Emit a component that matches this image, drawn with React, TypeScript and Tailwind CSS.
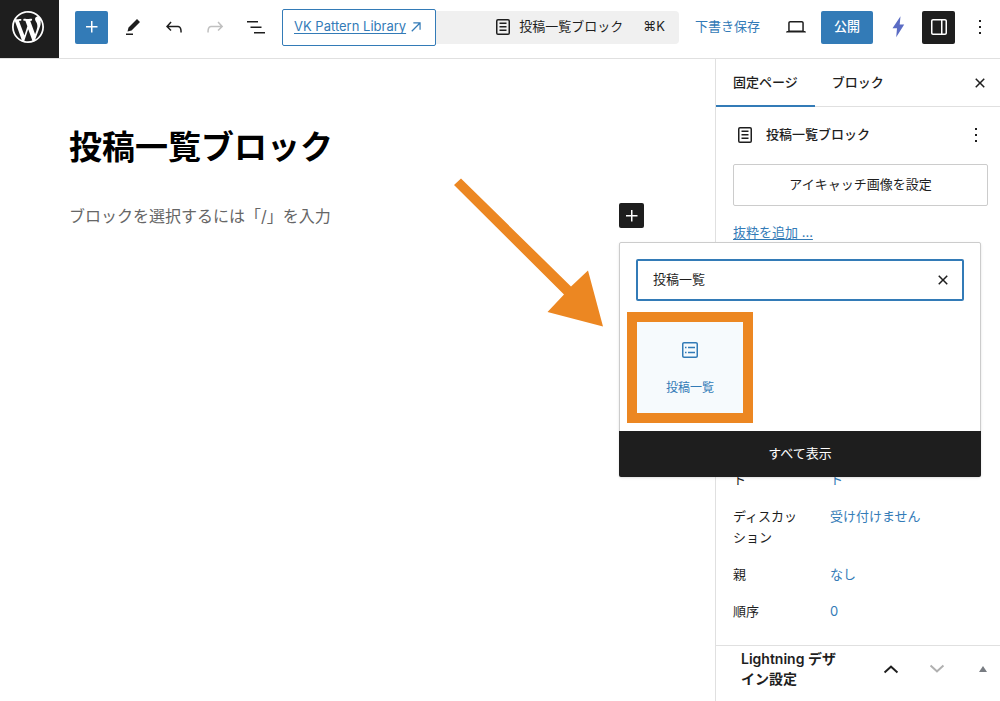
import { useState } from "react";
import type { ReactNode } from "react";
import clsx from "clsx";

const ICONS = {
  plus: "M11 12.5V17.5H12.5V12.5H17.5V11H12.5V6H11V11H6V12.5H11Z",
  edit: "m19 7-3-3-8.5 8.5-1 4 4-1L19 7Zm-7 11.5H5V20h7v-1.5Z",
  undo: "M18.3 11.7c-.6-.6-1.4-.9-2.3-.9H6.7l2.9-3.3-1.1-1-4.5 5L8.5 16l1-1-2.7-2.7H16c.5 0 .9.2 1.3.5 1 1 1 3.4 1 4.5v.3h1.5v-.2c0-1.5 0-4.3-1.5-5.7z",
  redo: "M15.6 6.5l-1.1 1 2.9 3.3H8c-.9 0-1.7.3-2.3.9-1.4 1.5-1.4 4.2-1.4 5.6v.2h1.5v-.3c0-1.1 0-3.5 1-4.5.3-.3.7-.5 1.3-.5h9.2L14.5 15l1.1 1.1 4.6-4.6-4.6-5z",
  listView: "M3 6h11v1.5H3V6Zm3.5 5.5h11V13h-11v-1.5ZM21 17H10v1.5h11V17Z",
  page: "M15.5 7.5h-7V9h7V7.5Zm-7 3.5h7v1.5h-7V11Zm7 3.5h-7V16h7v-1.5ZM17 4H7a2 2 0 0 0-2 2v12a2 2 0 0 0 2 2h10a2 2 0 0 0 2-2V6a2 2 0 0 0-2-2ZM7 5.5h10a.5.5 0 0 1 .5.5v12a.5.5 0 0 1-.5.5H7a.5.5 0 0 1-.5-.5V6a.5.5 0 0 1 .5-.5Z",
  desktop: "M20.5 16h-.7V8c0-1.1-.9-2-2-2H6.2c-1.1 0-2 .9-2 2v8h-.7c-.8 0-1.5.7-1.5 1.5h20c0-.8-.7-1.5-1.5-1.5zM5.7 8c0-.3.2-.5.5-.5h11.6c.3 0 .5.2.5.5v7.6H5.7V8z",
  drawer: "M18 4H6c-1.1 0-2 .9-2 2v12c0 1.1.9 2 2 2h12c1.1 0 2-.9 2-2V6c0-1.1-.9-2-2-2zm-4 14.5H6c-.3 0-.5-.2-.5-.5V6c0-.3.2-.5.5-.5h8v13zm4.5-.5c0 .3-.2.5-.5.5h-2.5v-13H18c.3 0 .5.2.5.5v12z",
  more: "M13 19h-2v-2h2v2zm0-6h-2v-2h2v2zm0-6h-2V5h2v2z",
  close: "M12 13.06l3.712 3.713 1.061-1.06L13.061 12l3.712-3.712-1.06-1.06L12 10.938 8.288 7.227l-1.061 1.06L10.939 12l-3.712 3.712 1.06 1.061L12 13.061z",
  chevronUp: "M4.900 14.800 12 8.200l7.100 6.600-1.300 1.500L12 10.900l-5.800 5.400z",
  chevronDown: "M19.100 9.200 12 15.800 4.900 9.200l1.300-1.500L12 13.100l5.800-5.400z",
  postList: "M18 4H6c-1.1 0-2 .9-2 2v12c0 1.1.9 2 2 2h12c1.1 0 2-.9 2-2V6c0-1.1-.9-2-2-2zm.5 14c0 .3-.2.5-.5.5H6c-.3 0-.5-.2-.5-.5V6c0-.3.2-.5.5-.5h12c.3 0 .5.2.5.5v12zM7 10.2h1.5V8.7H7v1.5zm0 5h1.5v-1.5H7v1.5zm3-5h7V8.7h-7v1.5zm0 5h7v-1.5h-7v1.5z",
  arrowUpRight: "M8 5v1.800h7.800L5 17.700 6.300 19 17.200 8.200V16H19V5H8z",
  bolt: "M14.500 1.300 6.500 13.300H11L10.200 22.300 18.200 9.500H13.700z",
};

function Icon({ name, className = "size-6" }: { name: keyof typeof ICONS; className?: string }) {
  return (
    <svg viewBox="0 0 24 24" fill="currentColor" fillRule="evenodd" aria-hidden="true" className={clsx("shrink-0", className)}>
      <path d={ICONS[name]} />
    </svg>
  );
}

function WordPressLogo() {
  return (
    <svg viewBox="0 0 20 20" fill="currentColor" aria-hidden="true" className="size-8">
      <path d="M20 10c0-5.51-4.49-10-10-10C4.48 0 0 4.49 0 10c0 5.52 4.48 10 10 10 5.51 0 10-4.48 10-10zM7.78 15.37L4.37 6.22c.55-.02 1.17-.08 1.17-.08.5-.06.44-1.13-.06-1.11 0 0-1.45.11-2.37.11-.18 0-.37 0-.58-.01C4.12 2.69 6.87 1.11 10 1.11c2.33 0 4.45.87 6.05 2.34-.68-.11-1.65.39-1.65 1.58 0 .74.45 1.36.9 2.1.35.61.55 1.36.55 2.46 0 1.49-1.4 5-1.4 5l-3.03-8.37c.54-.02.82-.17.82-.17.5-.05.44-1.25-.06-1.22 0 0-1.44.12-2.38.12-.87 0-2.33-.12-2.33-.12-.5-.03-.56 1.2-.06 1.22l.92.08 1.26 3.41zM17.41 10c.24-.64.74-1.87.43-4.25.7 1.29 1.05 2.71 1.05 4.25 0 3.29-1.73 6.24-4.4 7.78.97-2.59 1.94-5.2 2.92-7.78zM6.1 18.09C3.12 16.65 1.11 13.53 1.11 10c0-1.3.23-2.48.72-3.59C3.25 10.3 4.67 14.2 6.1 18.09zm4.03-6.63l2.58 6.98c-.86.29-1.76.45-2.71.45-.79 0-1.57-.11-2.29-.33.81-2.38 1.62-4.74 2.42-7.1z" />
    </svg>
  );
}

function IconButton({ name, label, className, disabled }: { name: keyof typeof ICONS; label: string; className?: string; disabled?: boolean }) {
  return (
    <button
      type="button"
      aria-label={label}
      disabled={disabled}
      className={clsx("flex size-[33px] shrink-0 items-center justify-center rounded-xs disabled:text-[#c0c0c0]", className)}
    >
      <Icon name={name} />
    </button>
  );
}

function Header() {
  return (
    <header className="flex h-[59px] border-b border-[#e0e0e0]">
      <a href="#dashboard" aria-label="ダッシュボード" className="flex h-[58px] w-[59px] shrink-0 items-center justify-center bg-[#1e1e1e] pr-1 pb-1 text-white">
        <WordPressLogo />
      </a>

      <div className="flex h-[54px] min-w-0 flex-1 items-center pl-4">
        <div className="flex shrink-0 items-center gap-2">
          <IconButton name="plus" label="ブロック挿入ツールを切り替え" className="bg-[#337bb7] text-white" />
          <IconButton name="edit" label="ツール" />
          <IconButton name="undo" label="元に戻す" />
          <IconButton name="redo" label="やり直す" disabled />
          <IconButton name="listView" label="ドキュメント概観" />
        </div>

        <a href="#patterns" className="ml-[10px] flex h-[37px] shrink-0 items-center gap-0.5 rounded-xs border border-[#337bb7] bg-white px-[11px] text-[#337bb7]">
          <span className="underline underline-offset-2">VK Pattern Library</span>
          <Icon name="arrowUpRight" className="size-4" />
        </a>

        <button type="button" className="flex h-[33px] min-w-0 flex-1 items-center justify-end rounded-r-sm bg-[#f0f0f0] pr-[14px]">
          <Icon name="page" />
          <span className="ml-1 whitespace-nowrap">投稿一覧ブロック</span>
          <span className="ml-5 shrink-0">⌘K</span>
        </button>

        <div className="flex shrink-0 items-center gap-2 pr-1 pl-4">
          <button type="button" className="mr-3 text-[#337bb7]">下書き保存</button>
          <IconButton name="desktop" label="表示" />
          <button type="button" className="h-[33px] rounded-xs bg-[#337bb7] px-[13px] font-medium text-white">公開</button>
          <IconButton name="bolt" label="Lightning" className="text-[#5b6cc4]" />
          <IconButton name="drawer" label="設定" className="bg-[#1e1e1e] text-white" />
          <IconButton name="more" label="オプション" />
        </div>
      </div>
    </header>
  );
}

function BlockInserter() {
  const [query, setQuery] = useState("投稿一覧");

  return (
    <div className="relative z-10">
      <button type="button" aria-label="ブロックを追加" className="flex size-[25px] items-center justify-center rounded-xs bg-[#1e1e1e] text-white">
        <Icon name="plus" />
      </button>

      <div className="absolute top-[39px] left-0 w-[362px] rounded-xs border border-[#ccc] bg-white shadow-sm">
        <div className="px-4 pt-4">
          <div className="flex h-[42px] items-center rounded-xs border-2 border-[#337bb7] pr-[7px] pl-[15px]">
            <input
              aria-label="検索"
              value={query}
              onChange={(e) => setQuery(e.target.value)}
              className="min-w-0 flex-1 outline-none"
            />
            <button type="button" aria-label="検索をリセット" onClick={() => setQuery("")}>
              <Icon name="close" />
            </button>
          </div>
        </div>
        <div className="flex px-[17px] pt-[21px] pb-[18px]">
          <button
            type="button"
            className="flex h-[91px] w-[106px] flex-col items-center gap-[18px] bg-[#f6fafd] pt-4 text-xs text-[#337bb7] outline-[10px] outline-[#ec8722] outline-solid"
          >
            <Icon name="postList" />
            投稿一覧
          </button>
        </div>
        <button type="button" className="-mx-px -mb-px block h-[46px] w-[362px] rounded-b-xs bg-[#1e1e1e] text-white">
          すべて表示
        </button>
      </div>
    </div>
  );
}

function Canvas() {
  return (
    <main className="relative min-w-0 flex-1 pt-[62px] pr-[71px] pl-[69px]">
      <h1 className="text-[33px] leading-[52px] font-bold text-black">投稿一覧ブロック</h1>
      <div className="mt-[30px] flex items-center justify-between">
        <p className="text-base leading-6 text-[#666]">ブロックを選択するには「/」を入力</p>
        <BlockInserter />
      </div>

      {/* pointer to the search result */}
      <svg viewBox="0 0 150 150" fill="#ec8722" aria-hidden="true" className="absolute top-[118px] right-[112px] z-20 size-[150px]">
        <path d="M8 1.500 118 109.500 135 93.500 150 149.500 94.500 135 111 117.500 1 8z" />
      </svg>
    </main>
  );
}

function SummaryRow({ label, children }: { label: string; children: ReactNode }) {
  return (
    <div className="flex py-2 leading-[21px]">
      <dt className="w-[66px] shrink-0">{label}</dt>
      <dd className="ml-[31px] text-[#337bb7]">
        <button type="button" className="text-left">{children}</button>
      </dd>
    </div>
  );
}

function Sidebar() {
  return (
    <aside className="flex w-[285px] shrink-0 flex-col border-l border-[#e0e0e0]">
      <div className="flex h-12 shrink-0 items-center border-b border-[#e0e0e0] pr-1 font-medium">
        <button type="button" className="-mb-px h-12 border-b-2 border-[#337bb7] px-[17px] pt-0.5">固定ページ</button>
        <button type="button" className="h-12 px-[17px]">ブロック</button>
        <IconButton name="close" label="設定を閉じる" className="ml-auto" />
      </div>

      <div className="flex-1 pt-3 pr-3 pl-[17px]">
        <div className="flex h-8 items-center">
          <Icon name="page" />
          <h2 className="ml-[9px] font-medium">投稿一覧ブロック</h2>
          <button type="button" aria-label="操作" className="ml-auto">
            <Icon name="more" />
          </button>
        </div>
        <button type="button" className="mt-[13px] h-[42px] w-full rounded-xs border border-[#ccc]">アイキャッチ画像を設定</button>
        <a href="#excerpt" className="mt-4 block w-fit leading-5 text-[#337bb7] underline underline-offset-2">抜粋を追加 ...</a>
        <dl className="mt-[219px]">
          <SummaryRow label="ト">ト</SummaryRow>
          <SummaryRow label="ディスカッション">受け付けません</SummaryRow>
          <SummaryRow label="親">なし</SummaryRow>
          <SummaryRow label="順序">0</SummaryRow>
        </dl>
      </div>

      <div className="mt-[14px] flex h-14 items-start border-t border-[#e0e0e0] pt-[3px] pl-[25px]">
        <h2 className="w-[104px] text-sm leading-5 font-semibold">Lightning デザイン設定</h2>
        <div className="ml-auto flex h-10 items-center">
          <button type="button" aria-label="上に移動" className="flex w-[46px] justify-center">
            <Icon name="chevronUp" />
          </button>
          <button type="button" aria-label="下に移動" disabled className="flex w-[46px] justify-center text-[#b0b0b0]">
            <Icon name="chevronDown" />
          </button>
          <button type="button" aria-label="パネルを切り替え" className="flex w-10 justify-end pr-[13px] text-[#787c82]">
            <svg viewBox="0 0 8 6" fill="currentColor" aria-hidden="true" className="h-[6px] w-2">
              <path d="M4 0 8 6H0z" />
            </svg>
          </button>
        </div>
      </div>
    </aside>
  );
}

export default function App() {
  return (
    <div className="flex min-h-screen flex-col bg-white font-['Inter','Noto_Sans_CJK_JP',sans-serif] text-[13px] text-[#1e1e1e]">
      <Header />
      <div className="flex flex-1">
        <Canvas />
        <Sidebar />
      </div>
    </div>
  );
}
